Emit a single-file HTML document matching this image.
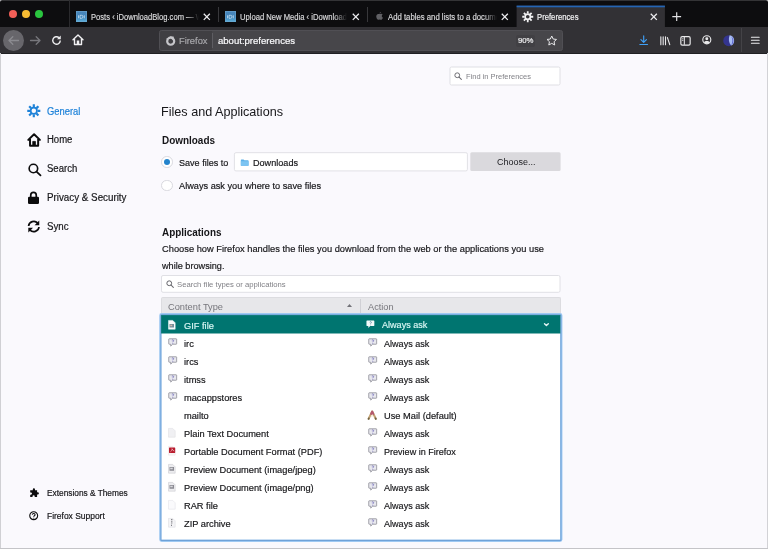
<!DOCTYPE html>
<html>
<head>
<meta charset="utf-8">
<title>Preferences</title>
<style>
*{box-sizing:border-box;margin:0;padding:0}
html,body{width:768px;height:549px;overflow:hidden;background:#faf9fd;font-family:"Liberation Sans",sans-serif;}
body{position:relative;color:#141417}
.abs{position:absolute}
svg{display:block;overflow:visible}
.t{position:absolute;white-space:nowrap;transform-origin:0 50%;-webkit-text-stroke:.18px currentColor;filter:blur(.3px)}
.tl{position:absolute;top:9.800px;width:7.800px;height:7.800px;border-radius:50%;filter:blur(.3px)}
.sep{position:absolute;top:7px;width:1px;height:15px;background:#38383b}
.tabx{position:absolute;top:12.700px;width:7.600px;height:7.600px}
</style>
</head>
<body>
<!-- TAB BAR -->
<div class="abs" style="left:0;top:0;width:768px;height:27px;background:#0d0d0f"></div>
<div class="abs" style="left:0;top:0;width:768px;height:1px;background:#343436"></div>
<svg class="abs" style="left:0;top:0;width:768px;height:4px" viewBox="0 0 768 4"><path d="M0 0h2.200A2.200 2.200 0 0 0 0 2.200zM768 0h-2.200A2.200 2.200 0 0 1 768 2.200z" fill="#dcdcde"/></svg>
<div class="tl" style="left:9px;background:#f25f58"></div>
<div class="tl" style="left:21.900px;background:#f6bb33"></div>
<div class="tl" style="left:34.800px;background:#2ac53f"></div>
<div class="sep" style="left:69px;top:0;height:27px;background:#2a2a2d"></div>
<div class="sep" style="left:218px"></div>
<div class="sep" style="left:367px"></div>
<!-- favicons -->
<svg class="abs" style="left:76px;top:11px;width:11px;height:11px" viewBox="0 0 11 11"><defs><linearGradient id="fg" x1="0" y1="0" x2="0" y2="1"><stop offset="0" stop-color="#4a84b8"/><stop offset=".6" stop-color="#3f86bd"/><stop offset="1" stop-color="#62b4dc"/></linearGradient></defs><rect width="11" height="11" fill="url(#fg)"/><rect x=".4" y=".4" width="10.200" height="10.200" fill="none" stroke="#6ea6d0" stroke-width=".8" stroke-opacity=".7"/><path d="M2.500 7.300V4.300M4 7.300V4.300h1.500a1.500 1.500 0 0 1 0 3z M8.300 4.300v3" stroke="#cfe3f2" stroke-width=".9" fill="none" stroke-opacity=".85"/></svg>
<svg class="abs" style="left:225px;top:11px;width:11px;height:11px" viewBox="0 0 11 11"><defs><linearGradient id="fg2" x1="0" y1="0" x2="0" y2="1"><stop offset="0" stop-color="#4a84b8"/><stop offset=".6" stop-color="#3f86bd"/><stop offset="1" stop-color="#62b4dc"/></linearGradient></defs><rect width="11" height="11" fill="url(#fg2)"/><rect x=".4" y=".4" width="10.200" height="10.200" fill="none" stroke="#6ea6d0" stroke-width=".8" stroke-opacity=".7"/><path d="M2.500 7.300V4.300M4 7.300V4.300h1.500a1.500 1.500 0 0 1 0 3z M8.300 4.300v3" stroke="#cfe3f2" stroke-width=".9" fill="none" stroke-opacity=".85"/></svg>
<!-- apple favicon -->
<svg class="abs" style="left:375.500px;top:12px;width:7px;height:8.500px" viewBox="0 0 14 17"><path d="M10 0c.1 1.300-1.300 3-3 2.900C6.900 1.500 8.500 0 10 0zM7.200 4.200c.8 0 1.700-.8 3-.8 1.200 0 2.400.6 3.100 1.700-2.600 1.500-2.200 5.200.5 6.200-.6 1.600-2 4.200-3.600 4.200-1.100 0-1.500-.7-2.800-.7s-1.700.7-2.800.7C2.700 15.500.500 11.500.500 8.800c0-3 1.900-5 3.900-5 1.200 0 2.100.4 2.800.4z" fill="#606064"/></svg>
<svg class="tabx" style="left:203.400px" viewBox="0 0 8 8"><path d="M.8.800L7.200 7.200M7.200.8L.8 7.200" stroke="#ededf0" stroke-width="1.350" fill="none"/></svg>
<svg class="tabx" style="left:351.700px" viewBox="0 0 8 8"><path d="M.8.800L7.200 7.200M7.200.8L.8 7.200" stroke="#ededf0" stroke-width="1.350" fill="none"/></svg>
<svg class="tabx" style="left:500.500px" viewBox="0 0 8 8"><path d="M.8.800L7.200 7.200M7.200.8L.8 7.200" stroke="#ededf0" stroke-width="1.350" fill="none"/></svg>
<!-- active tab -->
<svg class="abs" style="left:0;top:0;width:768px;height:28px" viewBox="0 0 768 28"><rect x="516.600" y="5.700" width="148.300" height="21.400" fill="#323135"/><rect x="516.600" y="5.600" width="148.300" height="1.700" fill="#2465b4"/></svg>

<svg class="abs" style="left:521.800px;top:11px;width:11.500px;height:11.500px" viewBox="0 0 22 22"><g fill="none" stroke="#f2f2f4"><circle cx="11" cy="11" r="5" stroke-width="3"/><path d="M11 .5v4.500M11 17v4.500M.5 11h4.500M17 11h4.500M3.600 3.600l3.200 3.200M15.200 15.200l3.200 3.200M3.600 18.400l3.200-3.200M15.200 6.800l3.200-3.200" stroke-width="3.400"/></g></svg>
<svg class="tabx" style="left:649.700px" viewBox="0 0 8 8"><path d="M.8.800L7.200 7.200M7.200.8L.8 7.200" stroke="#ededf0" stroke-width="1.350" fill="none"/></svg>
<svg class="abs" style="left:671.500px;top:11.600px;width:9.400px;height:9.400px" viewBox="0 0 10 10"><path d="M5 .3V9.700M.3 5H9.700" stroke="#e2e2e5" stroke-width="1.250" fill="none"/></svg>
<!-- NAV BAR -->
<div class="abs" style="left:0;top:27px;width:768px;height:26px;background:#323135"></div>
<div class="abs" style="left:0;top:52.500px;width:768px;height:1px;background:#202023"></div>
<div class="abs" style="left:3px;top:29.500px;width:21px;height:21px;border-radius:50%;background:#67666b"></div>
<svg class="abs" style="left:8px;top:35.500px;width:11px;height:9px" viewBox="0 0 11 9"><path d="M10.500 4.500H1.200M4.800.8L1 4.500l3.800 3.700" stroke="#8b8b90" stroke-width="1.300" fill="none" stroke-linecap="round" stroke-linejoin="round"/></svg>
<svg class="abs" style="left:29.500px;top:35.500px;width:11px;height:9px" viewBox="0 0 11 9"><path d="M.5 4.500h9.300M6.200.8L10 4.500 6.200 8.200" stroke="#77777c" stroke-width="1.300" fill="none" stroke-linecap="round" stroke-linejoin="round"/></svg>
<svg class="abs" style="left:51px;top:34.500px;width:11px;height:11px" viewBox="0 0 22 22"><path d="M18.500 11a7.500 7.500 0 1 1-2.600-5.700" stroke="#f0f0f2" stroke-width="2.800" fill="none"/><path d="M19.500 1v7.500H12z" fill="#f0f0f2"/></svg>
<svg class="abs" style="left:71.500px;top:34.200px;width:12px;height:11.500px" viewBox="0 0 24 23"><path d="M2 11.500L12 2l10 9.500M5 10v11h14V10" stroke="#f0f0f2" stroke-width="2.800" fill="none" stroke-linejoin="round" stroke-linecap="round"/><rect x="9.500" y="13" width="5" height="8" fill="#f0f0f2"/></svg>
<!-- URL bar -->
<div class="abs" style="left:159px;top:30px;width:403.500px;height:20.500px;background:#47464a;border:1px solid #504f54;border-radius:2.500px"></div>
<div class="abs" style="left:160px;top:31px;width:52px;height:18.500px;background:#403f43;border-radius:2px 0 0 2px"></div>
<div class="abs" style="left:212px;top:33px;width:1px;height:14.500px;background:#5e5d62"></div>
<svg class="abs" style="left:164.600px;top:34.800px;width:11.400px;height:11.400px" viewBox="0 0 22 22"><circle cx="11" cy="12" r="6.800" stroke="#c6c6ca" stroke-width="4.200" fill="none"/><path d="M9 2.500l8.500 1-3 6.500z" fill="#c6c6ca"/><path d="M2.500 6.500l3.500.5-1.500 3z" fill="#c6c6ca"/></svg>
<div class="abs" style="left:515.500px;top:34.500px;width:19.500px;height:12px;background:#414044;border-radius:2px"></div>
<svg class="abs" style="left:546px;top:34.700px;width:11.500px;height:11px" viewBox="0 0 23 22"><path d="M11.500 2l2.900 6.100 6.600.8-4.900 4.500 1.300 6.600-5.900-3.300-5.900 3.300 1.300-6.600L2 8.900l6.600-.8z" stroke="#e8e8ea" stroke-width="2" fill="none" stroke-linejoin="round"/></svg>
<!-- toolbar right icons -->
<svg class="abs" style="left:639.200px;top:35.200px;width:9.400px;height:10.800px" viewBox="0 0 22 24"><path d="M11 1.500v14M4.500 10L11 16.500 17.500 10M2 21.500h18" stroke="#3fa0f6" stroke-width="2.700" fill="none" stroke-linejoin="round" stroke-linecap="round"/></svg>
<svg class="abs" style="left:659.600px;top:35.600px;width:10.600px;height:9.600px" viewBox="0 0 25 21"><path d="M2 1v19M7.500 1v19M13 1v19M17.500 3l5.500 16.500" stroke="#e9e9eb" stroke-width="2.600" fill="none" stroke-linecap="round"/></svg>
<svg class="abs" style="left:680.300px;top:35.500px;width:11px;height:9.800px" viewBox="0 0 23 21"><rect x="1.500" y="1.500" width="20" height="18" rx="3" stroke="#e9e9eb" stroke-width="2.500" fill="none"/><path d="M9 2v17" stroke="#e9e9eb" stroke-width="2.200"/><path d="M4 6h3M4 9.500h3" stroke="#e9e9eb" stroke-width="1.600"/></svg>
<svg class="abs" style="left:702.300px;top:35.300px;width:9.600px;height:9.600px" viewBox="0 0 22 22"><circle cx="11" cy="11" r="9.200" stroke="#e9e9eb" stroke-width="2.600" fill="none"/><circle cx="11" cy="8.500" r="3.400" fill="#e9e9eb"/><path d="M4.500 16.500c2-4 11-4 13 0-3 4.500-10 4.500-13 0z" fill="#e9e9eb"/></svg>
<svg class="abs" style="left:723.400px;top:34.700px;width:11.400px;height:11.400px" viewBox="0 0 24 24"><circle cx="12" cy="12" r="11.500" fill="#34358f"/><path d="M14 .7a11.500 11.500 0 0 1 3 21.600C12 17 11 8 14 .7z" fill="#a9bdf2"/><path d="M17 3c4 4 4 13 0 18 6-3 7-14 0-18z" fill="#4a52c8"/></svg>
<div class="abs" style="left:741px;top:28px;width:1px;height:24px;background:#444347"></div>
<svg class="abs" style="left:751.300px;top:36px;width:8.600px;height:8.600px" viewBox="0 0 20 19"><path d="M1 2.500h18M1 9.500h18M1 16.500h18" stroke="#ededf0" stroke-width="2.600" fill="none" stroke-linecap="round"/></svg>
<!-- SIDEBAR ICONS -->
<svg class="abs" style="left:27px;top:104.300px;width:13.600px;height:13.600px" viewBox="0 0 27 27"><g fill="none" stroke="#1e82d8"><circle cx="13.500" cy="13.500" r="6.200" stroke-width="3.400"/><path d="M13.500 .5v5.500M13.500 21v5.500M.5 13.500h5.500M21 13.500h5.500M4.300 4.300l3.900 3.900M18.800 18.800l3.900 3.900M4.300 22.700l3.900-3.900M18.800 8.200l3.900-3.900" stroke-width="4.300"/></g></svg>
<svg class="abs" style="left:27.200px;top:133px;width:14.200px;height:13.800px" viewBox="0 0 28 27"><path d="M2.500 13.500L14 2.500l11.500 11M6 12v13h16V12" stroke="#0c0c0d" stroke-width="3.900" fill="none" stroke-linejoin="round" stroke-linecap="round"/><path d="M11.300 25v-8.500h5.400V25" fill="#0c0c0d" stroke="#0c0c0d" stroke-width="1.500"/></svg>
<svg class="abs" style="left:28px;top:162.500px;width:13.500px;height:13.200px" viewBox="0 0 27 26"><circle cx="10.800" cy="10.800" r="8.500" stroke="#0c0c0d" stroke-width="3.300" fill="none"/><path d="M17 17l8 7.500" stroke="#0c0c0d" stroke-width="3.600" stroke-linecap="round"/></svg>
<svg class="abs" style="left:28.400px;top:190.800px;width:11px;height:13.200px" viewBox="0 0 22 26"><path d="M5.500 12V8a5.500 5.500 0 0 1 11 0v4" stroke="#0c0c0d" stroke-width="3.400" fill="none"/><rect x="0" y="11.500" width="22" height="14.500" rx="2.500" fill="#0c0c0d"/></svg>
<svg class="abs" style="left:27.300px;top:219.600px;width:13.600px;height:13px" viewBox="0 0 26 25"><path d="M3 11.500a10 10 0 0 1 17.500-5.500" stroke="#0c0c0d" stroke-width="3.300" fill="none"/><path d="M23.500 1v9h-9z" fill="#0c0c0d"/><path d="M23 13.500a10 10 0 0 1-17.500 5.500" stroke="#0c0c0d" stroke-width="3.300" fill="none"/><path d="M2.500 24v-9h9z" fill="#0c0c0d"/></svg>
<!-- puzzle -->
<svg class="abs" style="left:29px;top:487.900px;width:10px;height:10px" viewBox="0 0 21 21"><path d="M8 3a2.300 2.300 0 0 1 4.600 0v1.500H17v4.500h1.500a2.300 2.300 0 0 1 0 4.600H17V19h-5v-1.500a2.300 2.300 0 0 0-4.600 0V19H2.500v-5H4a2.300 2.300 0 0 0 0-4.600H2.500V4.500H8z" fill="#0c0c0d"/></svg>
<!-- help -->
<svg class="abs" style="left:28.900px;top:511.300px;width:9.400px;height:9.400px" viewBox="0 0 20 20"><circle cx="10" cy="10" r="8.400" stroke="#0c0c0d" stroke-width="2.400" fill="none"/><path d="M7 7.800c.3-3.600 6-3.300 6 0 0 2.400-3 2.300-3 4.600M10 14.300v1.700" stroke="#0c0c0d" stroke-width="2.300" fill="none"/></svg>
<!-- MAIN -->
<svg class="abs" style="left:0;top:0;width:768px;height:549px" viewBox="0 0 768 549">
<rect x="450" y="67" width="110" height="18" rx="1.500" fill="#fff" stroke="#dfdfe4" stroke-width="1"/>
<rect x="234.400" y="152.700" width="233" height="18.200" rx="1.500" fill="#fff" stroke="#e1e1e6" stroke-width="1"/>
<rect x="470.300" y="152.200" width="90.300" height="18.900" rx="1.500" fill="#dad9dd"/>
<rect x="161.500" y="275.500" width="398.500" height="16.800" rx="1.500" fill="#fff" stroke="#e0e0e5" stroke-width="1"/>
</svg>
<svg class="abs" style="left:453.500px;top:71.500px;width:8px;height:8px" viewBox="0 0 16 16"><circle cx="6.500" cy="6.500" r="4.800" stroke="#68686e" stroke-width="1.900" fill="none"/><path d="M10.200 10.200l4.500 4.500" stroke="#68686e" stroke-width="2.100" stroke-linecap="round"/></svg>
<!-- radios -->
<div class="abs" style="left:161.400px;top:156.200px;width:11.600px;height:11.600px;border-radius:50%;background:#fff;border:1px solid #d9d9df"></div>
<div class="abs" style="left:164.200px;top:159px;width:6px;height:6px;border-radius:50%;background:#2383cc;filter:blur(.3px)"></div>
<div class="abs" style="left:161.400px;top:179.600px;width:11.600px;height:11.600px;border-radius:50%;background:#fff;border:1px solid #d9d9df"></div>
<!-- download path -->
<svg class="abs" style="left:239.900px;top:158.700px;width:9.400px;height:7.200px" viewBox="0 0 19.200 16"><path d="M1 2.200A1.200 1.200 0 0 1 2.200 1H7l2 2h8a1.200 1.200 0 0 1 1.200 1.200V14a1.200 1.200 0 0 1-1.200 1.200H2.200A1.200 1.200 0 0 1 1 14z" fill="#5bb0e8"/><path d="M1 5h17.200v9a1.200 1.200 0 0 1-1.200 1.200H2.200A1.200 1.200 0 0 1 1 14z" fill="#7cc4f2"/></svg>
<!-- search apps -->
<svg class="abs" style="left:165.600px;top:279.800px;width:8px;height:8px" viewBox="0 0 16 16"><circle cx="6.500" cy="6.500" r="4.800" stroke="#5c5c62" stroke-width="1.900" fill="none"/><path d="M10.200 10.200l4.500 4.500" stroke="#6a6a70" stroke-width="2.100" stroke-linecap="round"/></svg>
<!-- table header -->
<div class="abs" style="left:161px;top:297px;width:400px;height:18px;background:#e7e7ea;border:1px solid #dcdce0;border-bottom:none;border-radius:2px 2px 0 0"></div>
<div class="abs" style="left:360px;top:299px;width:1px;height:14px;background:#d0d0d5"></div>
<svg class="abs" style="left:347px;top:304.200px;width:5px;height:3px" viewBox="0 0 10 6"><path d="M0 6L5 0l5 6z" fill="#727278"/></svg>
<!-- LISTBOX -->
<svg class="abs" style="left:0;top:0;width:768px;height:549px" viewBox="0 0 768 549">
<rect x="160.250" y="314.100" width="401.150" height="226.800" rx="1.400" fill="#fff" stroke="#9fc9f2" stroke-width="2.100"/>
<rect x="160.900" y="314.900" width="400" height="225.500" rx=".5" fill="none" stroke="#6fa2d8" stroke-width="1.100"/>
<rect x="161.100" y="315.100" width="399.300" height="18.400" fill="#007570"/>
<path d="M544.500 323.700l1.900 1.900 1.900-1.900" stroke="#e6f6f5" stroke-width="1.350" fill="none" stroke-linecap="round" stroke-linejoin="round"/>
</svg>
<svg class="abs" style="left:366.4px;top:319.9px;width:8.8px;height:8.4px" viewBox="0 0 19 18"><path d="M2 1h15a1 1 0 0 1 1 1v10a1 1 0 0 1-1 1H9l-4 4v-4H2a1 1 0 0 1-1-1V2a1 1 0 0 1 1-1z" fill="#f4fbfb"/><path d="M8 4.5c.6-1.4 3.6-1.3 3.6.6 0 1.400-1.800 1.500-1.800 3M9.800 10v1.300" stroke="#3a6f8a" stroke-width="1.500" fill="none"/></svg>
<svg class="abs" style="left:368.0px;top:338.03px;width:9.4px;height:9px" viewBox="0 0 19 18"><path d="M2.500 1.500h14a1 1 0 0 1 1 1v9a1 1 0 0 1-1 1H9.500l-4 3.800v-3.800h-3a1 1 0 0 1-1-1v-9a1 1 0 0 1 1-1z" fill="#e8e8ee" stroke="#85858e" stroke-width="1.500"/><path d="M7.800 4.800c.6-1.400 3.600-1.300 3.600.6 0 1.400-1.800 1.500-1.800 3M9.600 10v1.300" stroke="#5f58b0" stroke-width="1.500" fill="none"/></svg>
<svg class="abs" style="left:368.0px;top:356.06px;width:9.4px;height:9px" viewBox="0 0 19 18"><path d="M2.500 1.500h14a1 1 0 0 1 1 1v9a1 1 0 0 1-1 1H9.500l-4 3.800v-3.800h-3a1 1 0 0 1-1-1v-9a1 1 0 0 1 1-1z" fill="#e8e8ee" stroke="#85858e" stroke-width="1.500"/><path d="M7.800 4.800c.6-1.400 3.600-1.300 3.600.6 0 1.400-1.800 1.500-1.800 3M9.600 10v1.300" stroke="#5f58b0" stroke-width="1.500" fill="none"/></svg>
<svg class="abs" style="left:368.0px;top:374.09px;width:9.4px;height:9px" viewBox="0 0 19 18"><path d="M2.500 1.500h14a1 1 0 0 1 1 1v9a1 1 0 0 1-1 1H9.500l-4 3.800v-3.800h-3a1 1 0 0 1-1-1v-9a1 1 0 0 1 1-1z" fill="#e8e8ee" stroke="#85858e" stroke-width="1.500"/><path d="M7.800 4.800c.6-1.400 3.600-1.300 3.600.6 0 1.400-1.800 1.500-1.800 3M9.600 10v1.300" stroke="#5f58b0" stroke-width="1.500" fill="none"/></svg>
<svg class="abs" style="left:368.0px;top:392.12px;width:9.4px;height:9px" viewBox="0 0 19 18"><path d="M2.500 1.500h14a1 1 0 0 1 1 1v9a1 1 0 0 1-1 1H9.500l-4 3.800v-3.800h-3a1 1 0 0 1-1-1v-9a1 1 0 0 1 1-1z" fill="#e8e8ee" stroke="#85858e" stroke-width="1.500"/><path d="M7.800 4.800c.6-1.400 3.600-1.300 3.600.6 0 1.400-1.800 1.500-1.800 3M9.600 10v1.300" stroke="#5f58b0" stroke-width="1.500" fill="none"/></svg>
<svg class="abs" style="left:367.100px;top:409.85px;width:10.400px;height:9.900px" viewBox="0 0 20.800 19.800"><path d="M10.400 3L3.200 17.500M10.400 3L17.600 17.500" stroke="#c2a274" stroke-width="4" stroke-linecap="round" fill="none"/><path d="M3.600 16.800l-.4.900M17.200 16.800l.4.900" stroke="#6e6242" stroke-width="3.600" stroke-linecap="round"/><path d="M8 8L10.400 3 12.800 8" stroke="#b4586e" stroke-width="3.600" stroke-linecap="round" stroke-linejoin="round" fill="none"/><path d="M8 14.500L10.400 10l2.400 4.500" stroke="#f3e6cf" stroke-width="1.500" fill="none"/></svg>
<svg class="abs" style="left:368.0px;top:428.18px;width:9.4px;height:9px" viewBox="0 0 19 18"><path d="M2.500 1.500h14a1 1 0 0 1 1 1v9a1 1 0 0 1-1 1H9.500l-4 3.800v-3.800h-3a1 1 0 0 1-1-1v-9a1 1 0 0 1 1-1z" fill="#e8e8ee" stroke="#85858e" stroke-width="1.500"/><path d="M7.800 4.800c.6-1.400 3.600-1.300 3.600.6 0 1.400-1.800 1.500-1.800 3M9.600 10v1.300" stroke="#5f58b0" stroke-width="1.500" fill="none"/></svg>
<svg class="abs" style="left:368.0px;top:446.21px;width:9.4px;height:9px" viewBox="0 0 19 18"><path d="M2.500 1.500h14a1 1 0 0 1 1 1v9a1 1 0 0 1-1 1H9.500l-4 3.800v-3.800h-3a1 1 0 0 1-1-1v-9a1 1 0 0 1 1-1z" fill="#e8e8ee" stroke="#85858e" stroke-width="1.500"/><path d="M7.800 4.800c.6-1.400 3.600-1.300 3.600.6 0 1.400-1.800 1.500-1.800 3M9.600 10v1.300" stroke="#5f58b0" stroke-width="1.500" fill="none"/></svg>
<svg class="abs" style="left:368.0px;top:464.24px;width:9.4px;height:9px" viewBox="0 0 19 18"><path d="M2.500 1.500h14a1 1 0 0 1 1 1v9a1 1 0 0 1-1 1H9.500l-4 3.800v-3.800h-3a1 1 0 0 1-1-1v-9a1 1 0 0 1 1-1z" fill="#e8e8ee" stroke="#85858e" stroke-width="1.500"/><path d="M7.800 4.800c.6-1.400 3.600-1.300 3.600.6 0 1.400-1.800 1.500-1.800 3M9.600 10v1.300" stroke="#5f58b0" stroke-width="1.500" fill="none"/></svg>
<svg class="abs" style="left:368.0px;top:482.27px;width:9.4px;height:9px" viewBox="0 0 19 18"><path d="M2.500 1.500h14a1 1 0 0 1 1 1v9a1 1 0 0 1-1 1H9.500l-4 3.800v-3.800h-3a1 1 0 0 1-1-1v-9a1 1 0 0 1 1-1z" fill="#e8e8ee" stroke="#85858e" stroke-width="1.500"/><path d="M7.800 4.800c.6-1.400 3.600-1.300 3.600.6 0 1.400-1.800 1.500-1.800 3M9.600 10v1.300" stroke="#5f58b0" stroke-width="1.500" fill="none"/></svg>
<svg class="abs" style="left:368.0px;top:500.3px;width:9.4px;height:9px" viewBox="0 0 19 18"><path d="M2.500 1.500h14a1 1 0 0 1 1 1v9a1 1 0 0 1-1 1H9.500l-4 3.800v-3.800h-3a1 1 0 0 1-1-1v-9a1 1 0 0 1 1-1z" fill="#e8e8ee" stroke="#85858e" stroke-width="1.500"/><path d="M7.800 4.800c.6-1.400 3.600-1.300 3.600.6 0 1.400-1.800 1.500-1.800 3M9.600 10v1.300" stroke="#5f58b0" stroke-width="1.500" fill="none"/></svg>
<svg class="abs" style="left:368.0px;top:518.33px;width:9.4px;height:9px" viewBox="0 0 19 18"><path d="M2.500 1.500h14a1 1 0 0 1 1 1v9a1 1 0 0 1-1 1H9.500l-4 3.800v-3.800h-3a1 1 0 0 1-1-1v-9a1 1 0 0 1 1-1z" fill="#e8e8ee" stroke="#85858e" stroke-width="1.500"/><path d="M7.800 4.800c.6-1.400 3.600-1.300 3.600.6 0 1.400-1.800 1.500-1.800 3M9.600 10v1.300" stroke="#5f58b0" stroke-width="1.500" fill="none"/></svg>
<svg class="abs" style="left:168.4px;top:319.50px;width:7.600px;height:9.600px" viewBox="0 0 15.200 19.200"><path d="M1 .8h8.500l4.900 4.900v12.700H1z" fill="#f6fbfb" stroke="#f6fbfb" stroke-width="1"/><rect x="3" y="8" width="9" height="7" fill="#6f8f9a"/><rect x="4.500" y="9.500" width="4" height="3" fill="#d8b8a8"/></svg>
<svg class="abs" style="left:167.8px;top:338.03px;width:9.4px;height:9px" viewBox="0 0 19 18"><path d="M2.500 1.500h14a1 1 0 0 1 1 1v9a1 1 0 0 1-1 1H9.500l-4 3.800v-3.800h-3a1 1 0 0 1-1-1v-9a1 1 0 0 1 1-1z" fill="#e8e8ee" stroke="#85858e" stroke-width="1.500"/><path d="M7.800 4.800c.6-1.400 3.600-1.300 3.600.6 0 1.400-1.800 1.500-1.800 3M9.600 10v1.300" stroke="#5f58b0" stroke-width="1.500" fill="none"/></svg>
<svg class="abs" style="left:167.8px;top:356.06px;width:9.4px;height:9px" viewBox="0 0 19 18"><path d="M2.500 1.500h14a1 1 0 0 1 1 1v9a1 1 0 0 1-1 1H9.500l-4 3.800v-3.800h-3a1 1 0 0 1-1-1v-9a1 1 0 0 1 1-1z" fill="#e8e8ee" stroke="#85858e" stroke-width="1.500"/><path d="M7.800 4.800c.6-1.400 3.600-1.300 3.600.6 0 1.400-1.800 1.500-1.800 3M9.600 10v1.300" stroke="#5f58b0" stroke-width="1.500" fill="none"/></svg>
<svg class="abs" style="left:167.8px;top:374.09px;width:9.4px;height:9px" viewBox="0 0 19 18"><path d="M2.500 1.500h14a1 1 0 0 1 1 1v9a1 1 0 0 1-1 1H9.500l-4 3.800v-3.800h-3a1 1 0 0 1-1-1v-9a1 1 0 0 1 1-1z" fill="#e8e8ee" stroke="#85858e" stroke-width="1.500"/><path d="M7.800 4.800c.6-1.400 3.600-1.300 3.600.6 0 1.400-1.800 1.500-1.800 3M9.600 10v1.300" stroke="#5f58b0" stroke-width="1.500" fill="none"/></svg>
<svg class="abs" style="left:167.8px;top:392.12px;width:9.4px;height:9px" viewBox="0 0 19 18"><path d="M2.500 1.500h14a1 1 0 0 1 1 1v9a1 1 0 0 1-1 1H9.500l-4 3.800v-3.800h-3a1 1 0 0 1-1-1v-9a1 1 0 0 1 1-1z" fill="#e8e8ee" stroke="#85858e" stroke-width="1.500"/><path d="M7.800 4.800c.6-1.400 3.600-1.300 3.600.6 0 1.400-1.800 1.500-1.800 3M9.600 10v1.300" stroke="#5f58b0" stroke-width="1.500" fill="none"/></svg>
<svg class="abs" style="left:168.4px;top:427.68px;width:7.600px;height:9.600px" viewBox="0 0 15.200 19.200"><path d="M1 .8h8.500l4.900 4.900v12.700H1z" fill="#f0f0f3" stroke="#dcdce1" stroke-width="1"/></svg>
<svg class="abs" style="left:168.4px;top:445.71px;width:7.600px;height:9.600px" viewBox="0 0 15.200 19.200"><path d="M1 .8h8.500l4.900 4.900v12.700H1z" fill="#f8f4f5" stroke="#ebe2e4" stroke-width="1"/><rect x="2" y="3.200" width="12.400" height="10.600" rx=".8" fill="#b91c2e"/><path d="M5 11.500c2-1 3.500-4.500 3-6 1 2.500 2.500 4 4.500 4.500" stroke="#f3d9dc" stroke-width="1.300" fill="none"/></svg>
<svg class="abs" style="left:168.4px;top:463.74px;width:7.600px;height:9.600px" viewBox="0 0 15.200 19.200"><path d="M1 .8h8.500l4.900 4.900v12.700H1z" fill="#ececef" stroke="#c4c4ca" stroke-width="1"/><rect x="3" y="6" width="9" height="7.500" fill="#8a8a92"/><rect x="4.500" y="7.500" width="5" height="3" fill="#d9d9de"/></svg>
<svg class="abs" style="left:168.4px;top:481.77px;width:7.600px;height:9.600px" viewBox="0 0 15.200 19.200"><path d="M1 .8h8.500l4.900 4.900v12.700H1z" fill="#ececef" stroke="#c4c4ca" stroke-width="1"/><rect x="3" y="6" width="9" height="7.500" fill="#8a8a92"/><rect x="4.500" y="7.500" width="5" height="3" fill="#d9d9de"/></svg>
<svg class="abs" style="left:168.4px;top:499.80px;width:7.600px;height:9.600px" viewBox="0 0 15.200 19.200"><path d="M1 .8h8.500l4.900 4.900v12.700H1z" fill="#fafafc" stroke="#e1e1e6" stroke-width="1"/></svg>
<svg class="abs" style="left:168.4px;top:517.83px;width:7.600px;height:9.600px" viewBox="0 0 15.200 19.200"><path d="M1 .8h8.500l4.900 4.900v12.700H1z" fill="#f4f4f6" stroke="#dadadf" stroke-width="1"/><path d="M7.600 2v10M6 14.500h3.200" stroke="#55555c" stroke-width="2" stroke-dasharray="2 1.500"/></svg>
<div class="abs" style="left:91.00px;top:12.64px;width:109.0px;height:9.96px;overflow:hidden;-webkit-mask-image:linear-gradient(to right,#000 95.0px,transparent 108.0px);mask-image:linear-gradient(to right,#000 95.0px,transparent 108.0px)"><div class="t" style="left:0;top:0;font-size:8.3px;line-height:9.96px;color:#d8d8da;transform:scaleX(0.9165);">Posts ‹ iDownloadBlog.com — W</div></div>
<div class="abs" style="left:240.00px;top:12.64px;width:108.0px;height:9.96px;overflow:hidden;-webkit-mask-image:linear-gradient(to right,#000 94.0px,transparent 107.0px);mask-image:linear-gradient(to right,#000 94.0px,transparent 107.0px)"><div class="t" style="left:0;top:0;font-size:8.3px;line-height:9.96px;color:#d8d8da;transform:scaleX(0.9199);">Upload New Media ‹ iDownloadB</div></div>
<div class="abs" style="left:388.00px;top:12.64px;width:110.0px;height:9.96px;overflow:hidden;-webkit-mask-image:linear-gradient(to right,#000 96.0px,transparent 109.0px);mask-image:linear-gradient(to right,#000 96.0px,transparent 109.0px)"><div class="t" style="left:0;top:0;font-size:8.3px;line-height:9.96px;color:#d8d8da;transform:scaleX(0.9339);">Add tables and lists to a docume</div></div>
<div class="t" style="left:537.00px;top:12.54px;font-size:8.3px;line-height:9.96px;color:#f4f4f6;transform:scaleX(0.9277);">Preferences</div>
<div class="t" style="left:178.50px;top:34.91px;font-size:9.6px;line-height:11.52px;color:#a9a9ad;transform:scaleX(0.9718);">Firefox</div>
<div class="t" style="left:218.00px;top:34.91px;font-size:9.6px;line-height:11.52px;color:#fbfbfd;transform:scaleX(0.9956);">about:preferences</div>
<div class="t" style="left:517.50px;top:36.21px;font-size:7.6px;line-height:9.12px;color:#f0f0f2;transform:scaleX(1.0195);">90%</div>
<div class="t" style="left:47.20px;top:105.73px;font-size:10px;line-height:12.0px;color:#1b80d8;transform:scaleX(0.9360);">General</div>
<div class="t" style="left:47.20px;top:134.44px;font-size:10px;line-height:12.0px;color:#151518;transform:scaleX(0.9518);">Home</div>
<div class="t" style="left:47.20px;top:163.13px;font-size:10px;line-height:12.0px;color:#151518;transform:scaleX(0.9531);">Search</div>
<div class="t" style="left:47.20px;top:192.03px;font-size:10px;line-height:12.0px;color:#151518;transform:scaleX(0.9798);">Privacy &amp; Security</div>
<div class="t" style="left:47.20px;top:220.84px;font-size:10px;line-height:12.0px;color:#151518;transform:scaleX(0.9715);">Sync</div>
<div class="t" style="left:46.90px;top:487.95px;font-size:8.4px;line-height:10.08px;color:#151518;transform:scaleX(0.9925);">Extensions &amp; Themes</div>
<div class="t" style="left:46.90px;top:511.05px;font-size:8.4px;line-height:10.08px;color:#151518;transform:scaleX(1.0093);">Firefox Support</div>
<div class="t" style="left:465.50px;top:71.52px;font-size:7.8px;line-height:9.36px;color:#808086;-webkit-text-stroke:0;transform:scaleX(0.9614);">Find in Preferences</div>
<div class="t" style="left:161.30px;top:103.82px;font-size:13.4px;line-height:16.08px;color:#17171a;-webkit-text-stroke:0;transform:scaleX(0.9419);">Files and Applications</div>
<div class="t" style="left:161.50px;top:135.45px;font-size:10.2px;line-height:12.24px;color:#151518;font-weight:700;-webkit-text-stroke:0;transform:scaleX(0.9753);">Downloads</div>
<div class="t" style="left:178.60px;top:156.72px;font-size:9.7px;line-height:11.64px;color:#151518;transform:scaleX(0.9359);">Save files to</div>
<div class="t" style="left:253.40px;top:156.72px;font-size:9.7px;line-height:11.64px;color:#151518;transform:scaleX(0.9387);">Downloads</div>
<div class="t" style="left:496.90px;top:156.22px;font-size:9.7px;line-height:11.64px;color:#1c1c20;-webkit-text-stroke:0;transform:scaleX(0.9284);">Choose...</div>
<div class="t" style="left:178.60px;top:180.12px;font-size:9.7px;line-height:11.64px;color:#151518;transform:scaleX(0.9486);">Always ask you where to save files</div>
<div class="t" style="left:161.50px;top:226.55px;font-size:10.2px;line-height:12.24px;color:#151518;font-weight:700;-webkit-text-stroke:0;transform:scaleX(0.9732);">Applications</div>
<div class="t" style="left:161.50px;top:242.92px;font-size:9.7px;line-height:11.64px;color:#151518;transform:scaleX(0.9599);">Choose how Firefox handles the files you download from the web or the applications you use</div>
<div class="t" style="left:161.50px;top:259.92px;font-size:9.7px;line-height:11.64px;color:#151518;transform:scaleX(0.9436);">while browsing.</div>
<div class="t" style="left:177.30px;top:279.72px;font-size:7.8px;line-height:9.36px;color:#808086;-webkit-text-stroke:0;transform:scaleX(0.9873);">Search file types or applications</div>
<div class="t" style="left:167.70px;top:300.71px;font-size:9.5px;line-height:11.4px;color:#76767c;-webkit-text-stroke:0;transform:scaleX(0.9762);">Content Type</div>
<div class="t" style="left:367.50px;top:300.71px;font-size:9.5px;line-height:11.4px;color:#76767c;-webkit-text-stroke:0;transform:scaleX(0.9695);">Action</div>
<div class="t" style="left:184.40px;top:319.62px;font-size:9.8px;line-height:11.76px;color:#d9f7f4;transform:scaleX(0.9450);">GIF file</div>
<div class="t" style="left:382.00px;top:318.82px;font-size:9.8px;line-height:11.76px;color:#d9f7f4;transform:scaleX(0.9245);">Always ask</div>
<div class="t" style="left:184.40px;top:337.95px;font-size:9.8px;line-height:11.76px;color:#151518;transform:scaleX(0.9450);">irc</div>
<div class="t" style="left:383.70px;top:337.95px;font-size:9.8px;line-height:11.76px;color:#151518;transform:scaleX(0.9245);">Always ask</div>
<div class="t" style="left:184.40px;top:355.98px;font-size:9.8px;line-height:11.76px;color:#151518;transform:scaleX(0.9450);">ircs</div>
<div class="t" style="left:383.70px;top:355.98px;font-size:9.8px;line-height:11.76px;color:#151518;transform:scaleX(0.9245);">Always ask</div>
<div class="t" style="left:184.40px;top:374.01px;font-size:9.8px;line-height:11.76px;color:#151518;transform:scaleX(0.9450);">itmss</div>
<div class="t" style="left:383.70px;top:374.01px;font-size:9.8px;line-height:11.76px;color:#151518;transform:scaleX(0.9245);">Always ask</div>
<div class="t" style="left:184.40px;top:392.04px;font-size:9.8px;line-height:11.76px;color:#151518;transform:scaleX(0.9450);">macappstores</div>
<div class="t" style="left:383.70px;top:392.04px;font-size:9.8px;line-height:11.76px;color:#151518;transform:scaleX(0.9245);">Always ask</div>
<div class="t" style="left:184.40px;top:410.07px;font-size:9.8px;line-height:11.76px;color:#151518;transform:scaleX(0.9450);">mailto</div>
<div class="t" style="left:383.70px;top:410.07px;font-size:9.8px;line-height:11.76px;color:#151518;transform:scaleX(0.9468);">Use Mail (default)</div>
<div class="t" style="left:184.40px;top:428.10px;font-size:9.8px;line-height:11.76px;color:#151518;transform:scaleX(0.9450);">Plain Text Document</div>
<div class="t" style="left:383.70px;top:428.10px;font-size:9.8px;line-height:11.76px;color:#151518;transform:scaleX(0.9245);">Always ask</div>
<div class="t" style="left:184.40px;top:446.13px;font-size:9.8px;line-height:11.76px;color:#151518;transform:scaleX(0.9450);">Portable Document Format (PDF)</div>
<div class="t" style="left:383.70px;top:446.13px;font-size:9.8px;line-height:11.76px;color:#151518;transform:scaleX(0.9235);">Preview in Firefox</div>
<div class="t" style="left:184.40px;top:464.16px;font-size:9.8px;line-height:11.76px;color:#151518;transform:scaleX(0.9450);">Preview Document (image/jpeg)</div>
<div class="t" style="left:383.70px;top:464.16px;font-size:9.8px;line-height:11.76px;color:#151518;transform:scaleX(0.9245);">Always ask</div>
<div class="t" style="left:184.40px;top:482.19px;font-size:9.8px;line-height:11.76px;color:#151518;transform:scaleX(0.9450);">Preview Document (image/png)</div>
<div class="t" style="left:383.70px;top:482.19px;font-size:9.8px;line-height:11.76px;color:#151518;transform:scaleX(0.9245);">Always ask</div>
<div class="t" style="left:184.40px;top:500.22px;font-size:9.8px;line-height:11.76px;color:#151518;transform:scaleX(0.9450);">RAR file</div>
<div class="t" style="left:383.70px;top:500.22px;font-size:9.8px;line-height:11.76px;color:#151518;transform:scaleX(0.9245);">Always ask</div>
<div class="t" style="left:184.40px;top:518.25px;font-size:9.8px;line-height:11.76px;color:#151518;transform:scaleX(0.9450);">ZIP archive</div>
<div class="t" style="left:383.70px;top:518.25px;font-size:9.8px;line-height:11.76px;color:#151518;transform:scaleX(0.9245);">Always ask</div>
<div class="abs" style="left:0;top:53px;width:1px;height:496px;background:#d0d0d4"></div>
<div class="abs" style="left:767px;top:53px;width:1px;height:496px;background:#d2d2d6"></div>
<div class="abs" style="left:0;top:547.5px;width:768px;height:1.500px;background:#c4c4c8"></div>
</body>
</html>
